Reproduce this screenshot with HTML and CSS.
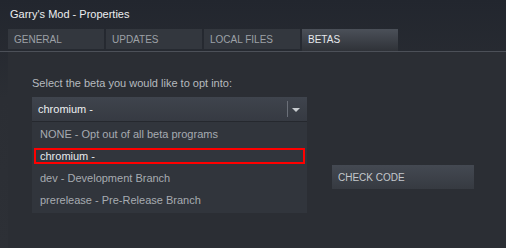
FILE: index.html
```html
<!DOCTYPE html>
<html lang="en">
<head>
  <meta charset="UTF-8">
  <title>Garry's Mod - Properties</title>
  <link rel="stylesheet" href="styles.css">
</head>
<body>
  <div class="window">
    <div class="title">Garry's Mod - Properties</div>

    <div class="tabs">
      <div class="tab">GENERAL</div>
      <div class="tab">UPDATES</div>
      <div class="tab">LOCAL FILES</div>
      <div class="tab active">BETAS</div>
    </div>

    <div class="panel">
      <div class="left">
        <div class="label">Select the beta you would like to opt into:</div>
        <div class="select">
          <span class="value">chromium -</span>
          <span class="sep"></span>
          <svg class="arrow" width="8" height="4" viewBox="0 0 8 4"><path d="M0 0 H8 L4 4 Z" fill="#c8ccd0"/></svg>
        </div>
        <ul class="options">
          <li>NONE - Opt out of all beta programs</li>
          <li class="picked">chromium -</li>
          <li>dev - Development Branch</li>
          <li>prerelease - Pre-Release Branch</li>
        </ul>
      </div>
      <div class="right">
        <button class="check">CHECK CODE</button>
      </div>
    </div>
  </div>
</body>
</html>
```

FILE: styles.css
```css
* {
  box-sizing: border-box;
}

body {
  margin: 0;
  width: 506px;
  height: 248px;
  overflow: hidden;
  font-family: "Liberation Sans", Arial, sans-serif;
  background: linear-gradient(#22262e, #2b2e34 40%, #2d3036);
}

.title {
  height: 29px;
  padding-left: 10px;
  line-height: 28px;
  font-size: 11px;
  color: #eceef0;
}

.tabs {
  display: flex;
  gap: 2px;
  padding-left: 8px;
  height: 23px;
  border-bottom: 1px solid #4c5058;
}

.tab {
  width: 96px;
  height: 20px;
  padding-left: 6px;
  line-height: 21px;
  font-size: 10px;
  color: #9da1a7;
  background: #33373e;
}

.tab.active {
  height: 22px;
  color: #e6e8eb;
  background: linear-gradient(#4b5059, #2f3238);
}

.panel {
  display: flex;
  margin-left: 8px;
  height: 196px;
  background: #2b2e34;
}

.left {
  width: 299px;
  padding: 25px 0 0 24px;
}

.label {
  font-size: 11px;
  line-height: 13px;
  color: #b6babf;
  margin-bottom: 7px;
}

.select {
  display: flex;
  align-items: center;
  height: 25px;
  padding-left: 6px;
  background: linear-gradient(#3f444d, #363a42);
  border-bottom: 1px solid #25282e;
}

.value {
  flex: 1;
  font-size: 11px;
  color: #eef0f2;
}

.sep {
  width: 1px;
  height: 16px;
  background: #6b7079;
}

.arrow {
  margin: 1px 7px 0 4px;
}

.options {
  list-style: none;
  margin: 0;
  padding: 1px 0 2px;
  background: #31353c;
}

.options li {
  height: 22px;
  padding-left: 8px;
  line-height: 22px;
  font-size: 11px;
  color: #a7abb1;
}

.options li.picked {
  height: 16px;
  margin: 3px 2px 3px 2px;
  padding-left: 4px;
  line-height: 12px;
  border: 2px solid #ff0000;
  color: #e8eaed;
}

.right {
  padding: 113px 0 0 25px;
}

.check {
  width: 142px;
  height: 24px;
  padding: 0 0 0 6px;
  border: none;
  text-align: left;
  font-family: inherit;
  font-size: 10px;
  color: #c4c8cd;
  background: linear-gradient(#444952, #363a41);
}
```
